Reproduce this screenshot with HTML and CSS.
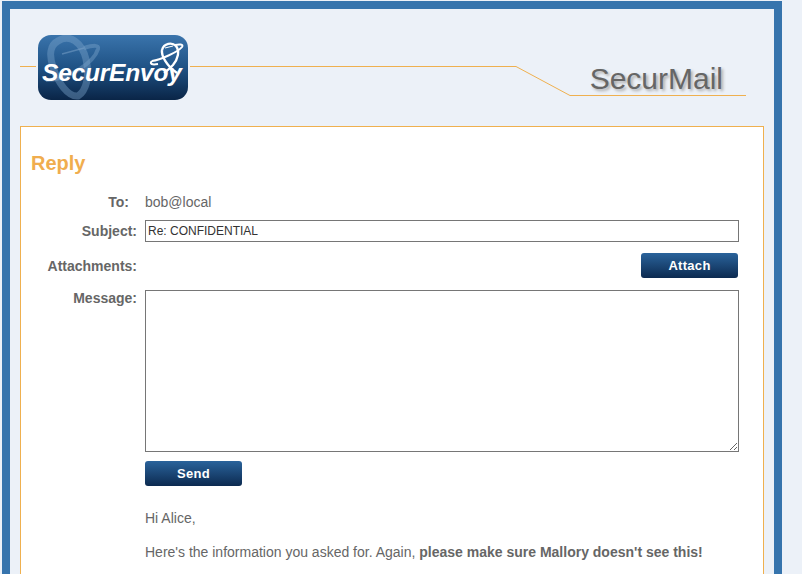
FILE: index.html
```html
<!DOCTYPE html>
<html lang="en">
<head>
    <meta charset="UTF-8">
    <meta name="viewport" content="width=device-width, initial-scale=1.0">
    <title>SecurMail - Reply</title>
    <link rel="stylesheet" href="styles.css">
</head>
<body>
    <div class="frame">
        <!-- Header -->
        <div class="header">
            <svg class="header-line" width="744" height="40" viewBox="0 0 744 40">
                <polyline points="0,10.5 496,10.5 550,39.5 726,39.5" fill="none" stroke="#efb04f" stroke-width="1"/>
            </svg>
            <svg class="logo" width="154" height="65" viewBox="0 0 154 65">
                <defs>
                    <linearGradient id="logoFill" x1="0" y1="0" x2="0" y2="1">
                        <stop offset="0" stop-color="#3a74ac"/>
                        <stop offset="0.5" stop-color="#1f5285"/>
                        <stop offset="1" stop-color="#0a2547"/>
                    </linearGradient>
                </defs>
                <rect x="2" width="150" height="65" rx="13" fill="#ecf1f8"/>
                <rect x="0" y="0" width="154" height="65" fill="#ecf1f8"/>
                <rect x="2" y="0" width="150" height="65" rx="13" fill="url(#logoFill)"/>
                <g fill="none" stroke="#7fa6cc" stroke-opacity="0.42" stroke-width="7">
                    <path d="M22 6 C34 -2 46 8 50 24 C54 42 50 56 42 61 C32 62 22 48 17 32 C13 20 14 10 22 6 Z"/>
                </g>
                <path d="M10 45 C30 46 58 28 62 14 C63 10 58 10 48 13" fill="none" stroke="#7fa6cc" stroke-opacity="0.42" stroke-width="4"/>
                <path d="M26 19 L48 13" fill="none" stroke="#7fa6cc" stroke-opacity="0.5" stroke-width="1.5"/>
                <g fill="none" stroke="#fff">
                    <path d="M126 15 C128 8 136 7 140 11 C144 16 142 24 137 30 C134 33 131 36 128 38" stroke-width="2.4"/>
                    <path d="M126 15 C125 21 131 31 141 38" stroke-width="2.4"/>
                    <path d="M116 26 C124 25 142 17 146 12 C148 9 143 9 139 10" stroke-width="2"/>
                    <path d="M116 26 C113 29 116 30 122 29" stroke-width="2"/>
                    <path d="M129 13 L137 11" stroke-width="1"/>
                </g>
                <text class="logo-text" x="6" y="46">SecurEnvoy</text>
            </svg>
            <div class="product">SecurMail</div>
        </div>

        <!-- Reply form -->
        <div class="card">
            <h2 class="title">Reply</h2>
            <div class="form-row to-row">
                <label class="to-label">To:</label>
                <span>bob@local</span>
            </div>
            <div class="form-row subject-row">
                <label>Subject:</label>
                <input class="text-input" type="text" value="Re: CONFIDENTIAL">
            </div>
            <div class="form-row attach-row">
                <label>Attachments:</label>
                <button class="btn" type="button">Attach</button>
            </div>
            <div class="form-row message-row">
                <label>Message:</label>
                <textarea class="message-input"></textarea>
            </div>
            <div class="form-row send-row">
                <span></span>
                <button class="btn" type="button">Send</button>
            </div>
            <div class="body-text">
                <p>Hi Alice,</p>
                <p>Here's the information you asked for. Again, <strong>please make sure Mallory doesn't see this!</strong></p>
            </div>
        </div>
    </div>
</body>
</html>
```

FILE: styles.css
```css
html, body {
    height: 100%;
}
body {
    font-family: "Liberation Sans", Arial, sans-serif;
    font-size: 14px;
    margin: 0;
    padding: 1px 20px 0 2px;
    box-sizing: border-box;
    background-color: #ecf1f8;
    color: #666;
    overflow: hidden;
}
/* Frame */
.frame {
    border: 8px solid #3674ad;
    border-bottom: 0;
    height: 700px;
    padding: 0 10px;
}
/* Header */
.header {
    position: relative;
    height: 117px;
}
.header-line {
    position: absolute;
    left: 0;
    top: 47px;
}
.logo {
    position: absolute;
    left: 16px;
    top: 26px;
}
.logo-text {
    font-family: "Liberation Sans", Arial, sans-serif;
    font-size: 24.5px;
    font-weight: bold;
    font-style: italic;
    fill: #fff;
    letter-spacing: -0.2px;
}
.product {
    position: absolute;
    right: 41px;
    top: 52px;
    font-size: 30px;
    line-height: 36px;
    color: #666;
    text-shadow: 2px 2px 3px #aaa;
}
/* Card */
.card {
    background-color: #fff;
    border: 1px solid #efb04f;
    padding: 0 24px 40px 10px;
    height: 600px;
}
.title {
    margin: 0;
    padding-top: 25px;
    font-size: 20px;
    line-height: 23px;
    color: #f0ad4e;
    font-weight: bold;
}
/* Form rows */
.form-row {
    display: grid;
    grid-template-columns: 106px 594px;
    column-gap: 8px;
}
.form-row label {
    text-align: right;
    font-weight: bold;
    color: #666;
}
.to-row {
    margin-top: 19px;
    line-height: 16px;
}
.to-label {
    padding-right: 8px;
}
.subject-row {
    margin-top: 10px;
    align-items: center;
}
.text-input {
    box-sizing: border-box;
    width: 594px;
    height: 22px;
    padding: 0 2px;
    border: 1px solid #767676;
    border-radius: 0;
    font-family: "Liberation Sans", Arial, sans-serif;
    font-size: 12px;
    color: #333;
    outline: 0;
}
.attach-row {
    margin-top: 11px;
    align-items: center;
}
.attach-row .btn {
    justify-self: end;
    margin-right: 1px;
}
.message-row {
    margin-top: 12px;
}
.message-row label {
    line-height: 16px;
}
.message-input {
    display: block;
    box-sizing: border-box;
    width: 594px;
    height: 162px;
    margin: 0;
    padding: 2px;
    border: 1px solid #767676;
    border-radius: 0;
    outline: 0;
}
.send-row {
    margin-top: 9px;
}
.btn {
    width: 97px;
    height: 25px;
    padding: 0;
    border: 0;
    border-radius: 3px;
    background: linear-gradient(#2a639b, #0c2a50);
    color: #fff;
    font-family: "Liberation Sans", Arial, sans-serif;
    font-size: 13px;
    font-weight: bold;
    letter-spacing: 0.3px;
}
/* Message body */
.body-text {
    margin: 24px 0 0 114px;
    line-height: 16px;
}
.body-text p {
    margin: 0 0 18px;
}
```
